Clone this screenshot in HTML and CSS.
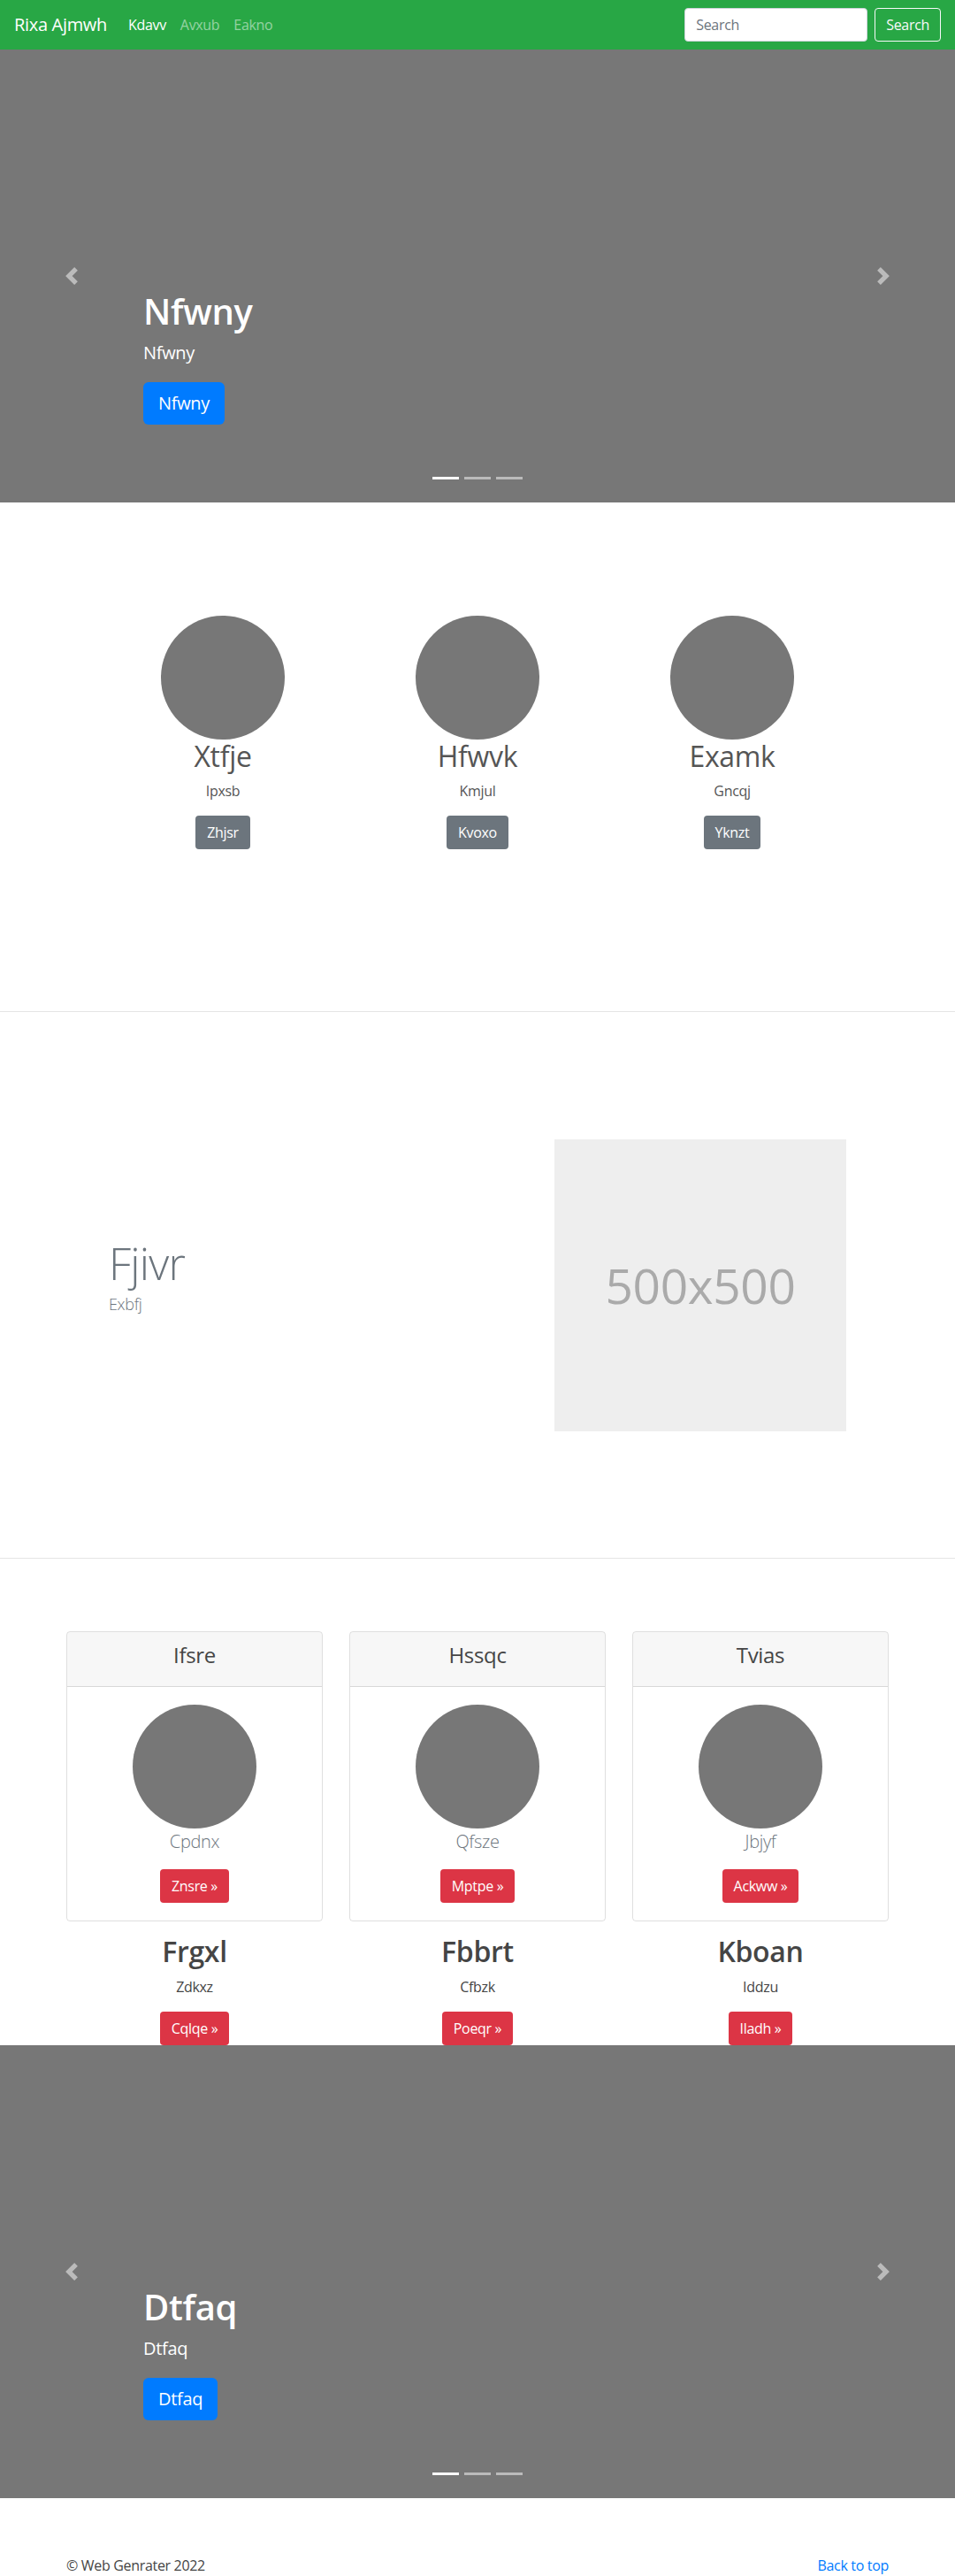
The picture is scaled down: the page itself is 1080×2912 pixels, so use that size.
FILE: index.html
```html
<!DOCTYPE html>
<html lang="en">
<head>
    <meta charset="UTF-8">
    <meta name="viewport" content="width=device-width, initial-scale=1.0">
    <title>Rixa Ajmwh</title>
    <link rel="stylesheet" href="styles.css">
</head>
<body>

    <nav class="navbar">
        <a class="brand" href="#">Rixa Ajmwh</a>
        <ul class="nav-links">
            <li><a class="nav-link active" href="#">Kdavv</a></li>
            <li><a class="nav-link" href="#">Avxub</a></li>
            <li><a class="nav-link" href="#">Eakno</a></li>
        </ul>
        <form class="search-form">
            <input class="search-input" type="text" placeholder="Search">
            <button class="btn btn-outline-light" type="submit">Search</button>
        </form>
    </nav>

    <!-- Top carousel -->
    <div class="carousel">
        <div class="carousel-caption">
            <h1>Nfwny</h1>
            <p>Nfwny</p>
            <a class="btn btn-lg btn-primary" href="#">Nfwny</a>
        </div>
        <a class="carousel-control prev" href="#">
            <svg width="20" height="20" viewBox="0 0 8 8"><path d="M5.25 0l-4 4 4 4 1.5-1.5L4.25 4l2.5-2.5L5.25 0z"/></svg>
        </a>
        <a class="carousel-control next" href="#">
            <svg width="20" height="20" viewBox="0 0 8 8"><path d="M2.75 0l-1.5 1.5L3.75 4l-2.5 2.5L2.75 8l4-4-4-4z"/></svg>
        </a>
        <ol class="carousel-indicators">
            <li class="active"></li>
            <li></li>
            <li></li>
        </ol>
    </div>

    <!-- Marketing -->
    <section class="marketing">
        <div class="marketing-row">
            <div class="marketing-col">
                <div class="circle"></div>
                <h2>Xtfje</h2>
                <p>Ipxsb</p>
                <a class="btn btn-secondary" href="#">Zhjsr</a>
            </div>
            <div class="marketing-col">
                <div class="circle"></div>
                <h2>Hfwvk</h2>
                <p>Kmjul</p>
                <a class="btn btn-secondary" href="#">Kvoxo</a>
            </div>
            <div class="marketing-col">
                <div class="circle"></div>
                <h2>Examk</h2>
                <p>Gncqj</p>
                <a class="btn btn-secondary" href="#">Yknzt</a>
            </div>
        </div>
    </section>

    <hr class="divider">

    <!-- Featurette -->
    <section class="featurette">
        <div class="featurette-row">
            <div class="featurette-text">
                <h2 class="featurette-heading">Fjivr</h2>
                <p class="featurette-lead">Exbfj</p>
            </div>
            <div class="featurette-media">
                <div class="placeholder">500x500</div>
            </div>
        </div>
    </section>

    <hr class="divider">

    <!-- Cards -->
    <section class="pricing">
        <div class="pricing-row">
            <div class="pricing-col">
                <div class="card">
                    <div class="card-header"><h4>Ifsre</h4></div>
                    <div class="card-body">
                        <div class="circle"></div>
                        <p class="card-text">Cpdnx</p>
                        <a class="btn btn-danger" href="#">Znsre &raquo;</a>
                    </div>
                </div>
                <h2>Frgxl</h2>
                <p>Zdkxz</p>
                <a class="btn btn-danger" href="#">Cqlqe &raquo;</a>
            </div>
            <div class="pricing-col">
                <div class="card">
                    <div class="card-header"><h4>Hssqc</h4></div>
                    <div class="card-body">
                        <div class="circle"></div>
                        <p class="card-text">Qfsze</p>
                        <a class="btn btn-danger" href="#">Mptpe &raquo;</a>
                    </div>
                </div>
                <h2>Fbbrt</h2>
                <p>Cfbzk</p>
                <a class="btn btn-danger" href="#">Poeqr &raquo;</a>
            </div>
            <div class="pricing-col">
                <div class="card">
                    <div class="card-header"><h4>Tvias</h4></div>
                    <div class="card-body">
                        <div class="circle"></div>
                        <p class="card-text">Jbjyf</p>
                        <a class="btn btn-danger" href="#">Ackww &raquo;</a>
                    </div>
                </div>
                <h2>Kboan</h2>
                <p>Iddzu</p>
                <a class="btn btn-danger" href="#">Iladh &raquo;</a>
            </div>
        </div>
    </section>

    <!-- Bottom carousel -->
    <div class="carousel carousel-bottom">
        <div class="carousel-caption">
            <h1>Dtfaq</h1>
            <p>Dtfaq</p>
            <a class="btn btn-lg btn-primary" href="#">Dtfaq</a>
        </div>
        <a class="carousel-control prev" href="#">
            <svg width="20" height="20" viewBox="0 0 8 8"><path d="M5.25 0l-4 4 4 4 1.5-1.5L4.25 4l2.5-2.5L5.25 0z"/></svg>
        </a>
        <a class="carousel-control next" href="#">
            <svg width="20" height="20" viewBox="0 0 8 8"><path d="M2.75 0l-1.5 1.5L3.75 4l-2.5 2.5L2.75 8l4-4-4-4z"/></svg>
        </a>
        <ol class="carousel-indicators">
            <li class="active"></li>
            <li></li>
            <li></li>
        </ol>
    </div>

    <footer class="footer">
        <p>&copy; Web Genrater 2022</p>
        <a class="back-top" href="#">Back to top</a>
    </footer>

</body>
</html>
```

FILE: styles.css
```css
body {
    margin: 0;
    font-family: "Open Sans", "Noto Sans", sans-serif;
    font-size: 16px;
    line-height: 1.5;
    letter-spacing: -0.02em;
    color: #454545;
    background-color: #fff;
}

/* Navbar */
.navbar {
    display: flex;
    align-items: center;
    height: 56px;
    padding: 0 16px;
    background-color: #28a745;
}

.brand {
    font-size: 20px;
    line-height: 30px;
    color: #fff;
    text-decoration: none;
    margin-right: 16px;
}

.nav-links {
    display: flex;
    list-style: none;
    margin: 0;
    padding: 0;
}

.nav-link {
    display: block;
    padding: 8px;
    color: rgba(255, 255, 255, 0.5);
    text-decoration: none;
}

.nav-link.active {
    color: #fff;
}

.search-form {
    display: flex;
    align-items: center;
    margin-left: auto;
}

.search-input {
    box-sizing: border-box;
    width: 207px;
    height: 38px;
    padding: 6px 12px;
    margin-right: 8px;
    font-family: inherit;
    font-size: 16px;
    letter-spacing: inherit;
    color: #495057;
    border: 1px solid #ced4da;
    border-radius: 4px;
    background-color: #fff;
}

.search-input::placeholder {
    color: #6c757d;
}

/* Buttons */
.btn {
    display: inline-block;
    padding: 6px 12px;
    font-family: inherit;
    font-size: 16px;
    line-height: 24px;
    letter-spacing: inherit;
    color: #fff;
    text-decoration: none;
    border: 1px solid transparent;
    border-radius: 4px;
    cursor: pointer;
}

.btn-lg {
    padding: 8px 16px;
    font-size: 20px;
    line-height: 30px;
    border-radius: 6px;
}

.btn-outline-light {
    color: #f8f9fa;
    border-color: #f8f9fa;
    background-color: transparent;
}

.btn-primary { background-color: #007bff; }
.btn-secondary { background-color: #6c757d; }
.btn-danger { background-color: #dc3545; }

/* Carousel */
.carousel {
    position: relative;
    box-sizing: border-box;
    height: 512px;
    padding: 0 15% 88px;
    display: flex;
    flex-direction: column;
    justify-content: flex-end;
    background-color: #777;
    color: #fff;
}

.carousel-caption {
    display: flex;
    flex-direction: column;
    align-items: flex-start;
}

.carousel-caption h1 {
    margin: 0 0 8px;
    font-size: 40px;
    font-weight: 600;
    line-height: 1.2;
}

.carousel-caption p {
    margin: 0 0 18px;
    font-size: 20px;
    line-height: 1.5;
}

.carousel-control {
    position: absolute;
    top: 0;
    bottom: 0;
    width: 15%;
    display: flex;
    align-items: center;
    justify-content: center;
    opacity: 0.5;
}

.carousel-control svg {
    fill: #fff;
}

.carousel-control.prev { left: 0; }
.carousel-control.next { right: 0; }

.carousel-indicators {
    position: absolute;
    left: 0;
    right: 0;
    bottom: 26px;
    display: flex;
    justify-content: center;
    list-style: none;
    margin: 0;
    padding: 0;
}

.carousel-indicators li {
    width: 30px;
    height: 3px;
    margin: 0 3px;
    background-color: #fff;
    opacity: 0.5;
}

.carousel-indicators li.active {
    opacity: 1;
}

.carousel-bottom {
    margin-bottom: 64px;
}

/* Marketing */
.marketing {
    padding: 128px 0 183px;
}

.marketing-row {
    width: 864px;
    margin: 0 auto;
    display: grid;
    grid-template-columns: repeat(3, 1fr);
    text-align: center;
}

.circle {
    width: 140px;
    height: 140px;
    margin: 0 auto;
    border-radius: 50%;
    background-color: #777;
}

.marketing h2 {
    margin: 0 0 8px;
    font-size: 32px;
    font-weight: 400;
    line-height: 1.2;
    color: #555;
}

.marketing p {
    margin: 0 0 16px;
    color: #555;
}

.divider {
    margin: 0;
    border: 0;
    border-top: 1px solid rgba(0, 0, 0, 0.1);
}

/* Featurette */
.featurette {
    padding: 144px 0 143px;
}

.featurette-row {
    width: 864px;
    margin: 0 auto;
    display: grid;
    grid-template-columns: 7fr 5fr;
    align-items: center;
}

.featurette-text,
.featurette-media {
    padding: 0 15px;
}

.featurette-heading {
    margin: 0 0 8px;
    font-size: 50px;
    font-weight: 300;
    line-height: 1;
    letter-spacing: -0.8px;
    color: #6c757d;
}

.featurette-lead {
    margin: 0 0 16px;
    font-size: 18px;
    font-weight: 300;
    color: #6c757d;
}

.placeholder {
    width: 330px;
    height: 330px;
    display: flex;
    align-items: center;
    justify-content: center;
    background-color: #eee;
    color: #aaa;
    font-size: 55px;
}

/* Cards */
.pricing {
    padding-top: 82px;
}

.pricing-row {
    width: 930px;
    margin: 0 auto;
    display: grid;
    grid-template-columns: repeat(3, 1fr);
    column-gap: 30px;
    text-align: center;
}

.card {
    margin-bottom: 15px;
    border: 1px solid rgba(0, 0, 0, 0.125);
    border-radius: 4px;
    overflow: hidden;
}

.card-header {
    padding: 12px 20px;
    background-color: rgba(0, 0, 0, 0.03);
    border-bottom: 1px solid rgba(0, 0, 0, 0.125);
}

.card-header h4 {
    margin: 0 0 8px;
    font-size: 24px;
    font-weight: 400;
    line-height: 1.2;
}

.card-body {
    padding: 20px;
}

.card-text {
    margin: 0 0 16px;
    font-size: 20px;
    font-weight: 300;
    color: #6c757d;
}

.pricing-col h2 {
    margin: 0 0 8px;
    font-size: 32px;
    font-weight: 600;
    line-height: 1.2;
}

.pricing-col > p {
    margin: 0 0 16px;
}

/* Footer */
.footer {
    width: 930px;
    margin: 0 auto;
    display: flex;
    justify-content: space-between;
}

.footer p {
    margin: 0 0 16px;
}

.back-top {
    color: #007bff;
    text-decoration: none;
}
```
